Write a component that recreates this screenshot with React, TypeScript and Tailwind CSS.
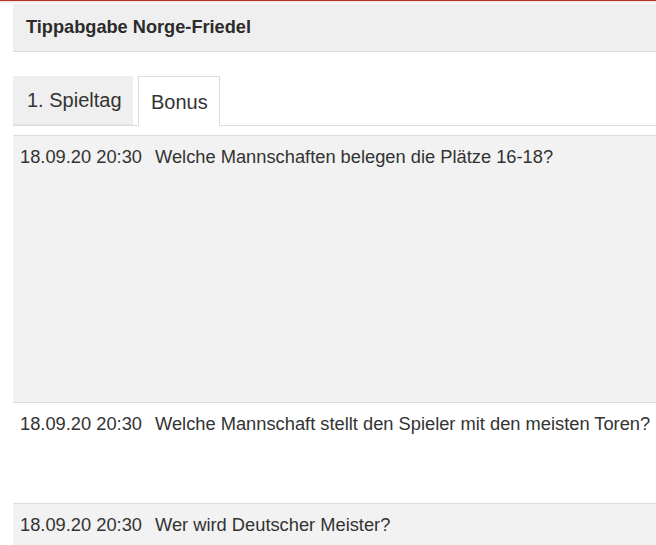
import React from "react";

const rows = [
  { date: "18.09.20 20:30", q: "Welche Mannschaften belegen die Plätze 16-18?", h: "h-[267px]", bg: "bg-[#f2f2f2]" },
  { date: "18.09.20 20:30", q: "Welche Mannschaft stellt den Spieler mit den meisten Toren?", h: "h-[101px]", bg: "bg-white" },
  { date: "18.09.20 20:30", q: "Wer wird Deutscher Meister?", h: "h-[60px]", bg: "bg-[#f2f2f2]" },
];

export default function App() {
  return (
    <div className="w-[656px] h-[545px] overflow-hidden bg-white text-[#333] font-['Liberation_Sans',Arial,sans-serif]">
      <div className="h-px bg-[#b0302a]" />
      <div className="h-[2px] bg-[#f7e9e8]" />
      <div className="pl-[13px]">
        <div className="mt-px h-[48px] bg-[#efefef] border-b border-[#dcdcdc] flex items-center pl-[13px] whitespace-nowrap">
          <span className="text-[18.2px] font-bold text-[#2b2b2b] leading-none">Tippabgabe Norge-Friedel</span>
        </div>
        <div className="mt-[24px] flex items-end border-b border-[#dcdcdc] h-[50px]">
          <div className="w-[120px] h-[49px] bg-[#efefef] border-b border-[#e4e4e4] flex items-center pl-[14px] text-[20px] whitespace-nowrap">
            1. Spieltag
          </div>
          <div className="ml-[5px] w-[82px] h-[50px] -mb-px bg-white border border-b-0 border-[#dcdcdc] flex items-center pl-[12px] text-[20px]">
            Bonus
          </div>
        </div>
        <div className="mt-[9px]">
          {rows.map((r, i) => (
            <div key={i} className={`${r.h} ${r.bg} border-t border-[#dcdcdc] flex items-start pt-[8px] pl-[7px] text-[18.3px] leading-[26px] whitespace-nowrap`}>
              <span className="w-[135px] shrink-0">{r.date}</span>
              <span>{r.q}</span>
            </div>
          ))}
        </div>
      </div>
    </div>
  );
}
